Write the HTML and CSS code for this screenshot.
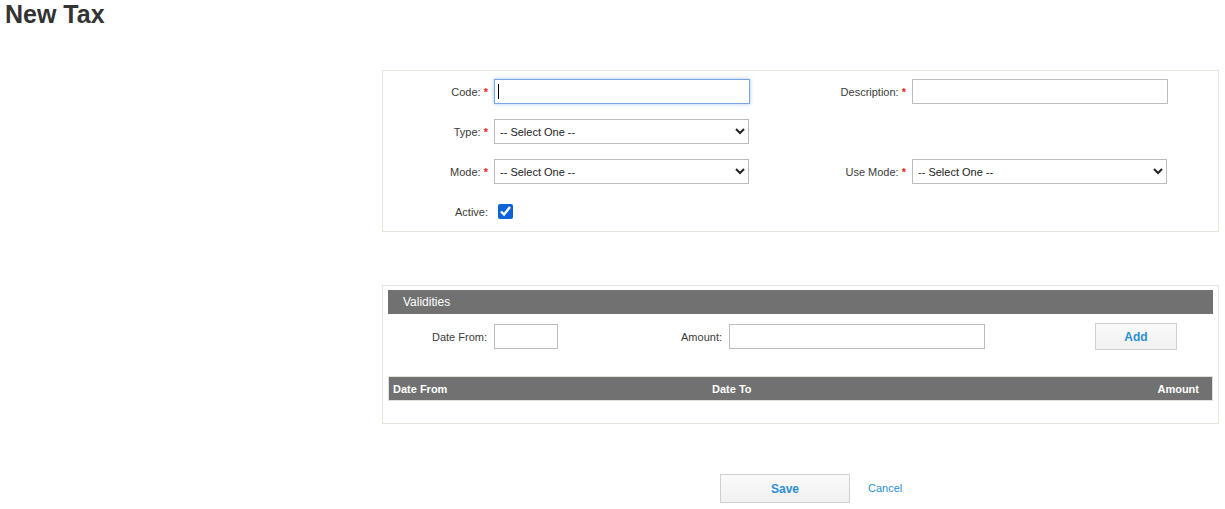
FILE: index.html
```html
<!DOCTYPE html>
<html lang="en">
<head>
<meta charset="utf-8">
<title>New Tax</title>
<link rel="stylesheet" href="styles.css">
</head>
<body>
<h1 class="title">New Tax</h1>
<div class="content">
  <section class="panel form-panel">
    <div class="form-grid">
      <label class="lbl">Code: <span class="req">*</span></label>
      <div class="field-wrap">
        <input class="txt focused" type="text">
        <span class="caret"></span>
      </div>
      <label class="lbl">Description: <span class="req">*</span></label>
      <input class="txt" type="text">

      <label class="lbl">Type: <span class="req">*</span></label>
      <select class="sel"><option>-- Select One --</option></select>
      <span></span><span></span>

      <label class="lbl">Mode: <span class="req">*</span></label>
      <select class="sel"><option>-- Select One --</option></select>
      <label class="lbl">Use Mode: <span class="req">*</span></label>
      <select class="sel"><option>-- Select One --</option></select>

      <label class="lbl">Active:</label>
      <div class="check-cell"><input class="chk" type="checkbox" checked></div>
    </div>
  </section>

  <section class="panel validity-panel">
    <div class="panel-head">Validities</div>
    <div class="validity-row">
      <label class="lbl">Date From:</label>
      <input class="txt" type="text">
      <label class="lbl">Amount:</label>
      <input class="txt" type="text">
      <span></span>
      <button class="btn add-btn" type="button">Add</button>
    </div>
    <div class="table-head">
      <span>Date From</span>
      <span>Date To</span>
      <span class="right">Amount</span>
    </div>
  </section>

  <div class="actions">
    <button class="btn save-btn" type="button">Save</button>
    <a class="cancel" href="#">Cancel</a>
  </div>
</div>
</body>
</html>
```

FILE: styles.css
```css
* { box-sizing: border-box; }

body {
  margin: 0;
  padding: 0 0 0 5px;
  font-family: "Liberation Sans", Arial, sans-serif;
  font-size: 11px;
  color: #3a3a3a;
  background: #fff;
}

.title {
  margin: 0;
  font-size: 25px;
  line-height: 28px;
  font-weight: bold;
  color: #333;
}

.content {
  margin-left: 377px;
  width: 837px;
}

.panel {
  border: 1px solid #e4e4dc;
  background: #fff;
}

.form-panel {
  margin-top: 42px;
  padding: 8px 0 7px 0;
}

.form-grid {
  display: grid;
  grid-template-columns: 111px 256px 162px 256px;
  grid-auto-rows: 25px;
  row-gap: 15px;
  align-items: center;
}

.lbl {
  text-align: right;
  padding-right: 6px;
  white-space: nowrap;
  color: #3c3c3c;
}

.req { color: #e8261f; font-weight: bold; }

.txt, .sel {
  height: 25px;
  width: 100%;
  border: 1px solid #bcbcbc;
  border-radius: 0;
  background: #fff;
  font-family: "Liberation Sans", Arial, sans-serif;
  font-size: 11px;
  color: #222;
  padding: 0 4px;
  margin: 0;
  outline: none;
}

.sel { width: 255px; padding-left: 1px; }

.field-wrap { position: relative; height: 25px; }

.txt.focused {
  border-color: #7aa5e6;
  box-shadow: 0 0 4px rgba(100, 150, 230, 0.55);
}

.caret {
  position: absolute;
  left: 4px;
  top: 5px;
  width: 1px;
  height: 15px;
  background: #000;
}

.check-cell { display: flex; align-items: center; padding-left: 4px; }

.chk {
  width: 15px;
  height: 15px;
  margin: 0;
  accent-color: #0f63d8;
}

.validity-panel {
  margin-top: 53px;
  padding: 4px 5px 22px 5px;
}

.panel-head {
  height: 24px;
  line-height: 24px;
  background: #717171;
  color: #fff;
  font-size: 12px;
  padding-left: 15px;
}

.validity-row {
  display: grid;
  grid-template-columns: 106px 64px 171px 256px 110px 82px;
  align-items: center;
  margin-top: 9px;
  height: 27px;
}

.validity-row .lbl { padding-right: 7px; }

.btn {
  height: 27px;
  border: 1px solid #cfcfcf;
  background: linear-gradient(#fafafa, #f1f1f1);
  color: #2b8fd0;
  font-family: "Liberation Sans", Arial, sans-serif;
  font-size: 12px;
  font-weight: bold;
  padding: 0;
  cursor: pointer;
}

.add-btn { width: 82px; }

.table-head {
  margin-top: 26px;
  height: 25px;
  background: #717171;
  border: 1px solid #e2e2da;
  color: #fff;
  font-weight: bold;
  font-size: 11px;
  display: grid;
  grid-template-columns: 319px 1fr auto;
  align-items: center;
  padding: 0 13px 0 4px;
}

.right { text-align: right; }

.actions {
  margin-top: 50px;
  display: flex;
  align-items: center;
  gap: 18px;
  padding-left: 338px;
}

.save-btn { width: 130px; height: 29px; }

.cancel {
  color: #2b8fd0;
  text-decoration: none;
  font-size: 11px;
  margin-bottom: 1px;
}
```
